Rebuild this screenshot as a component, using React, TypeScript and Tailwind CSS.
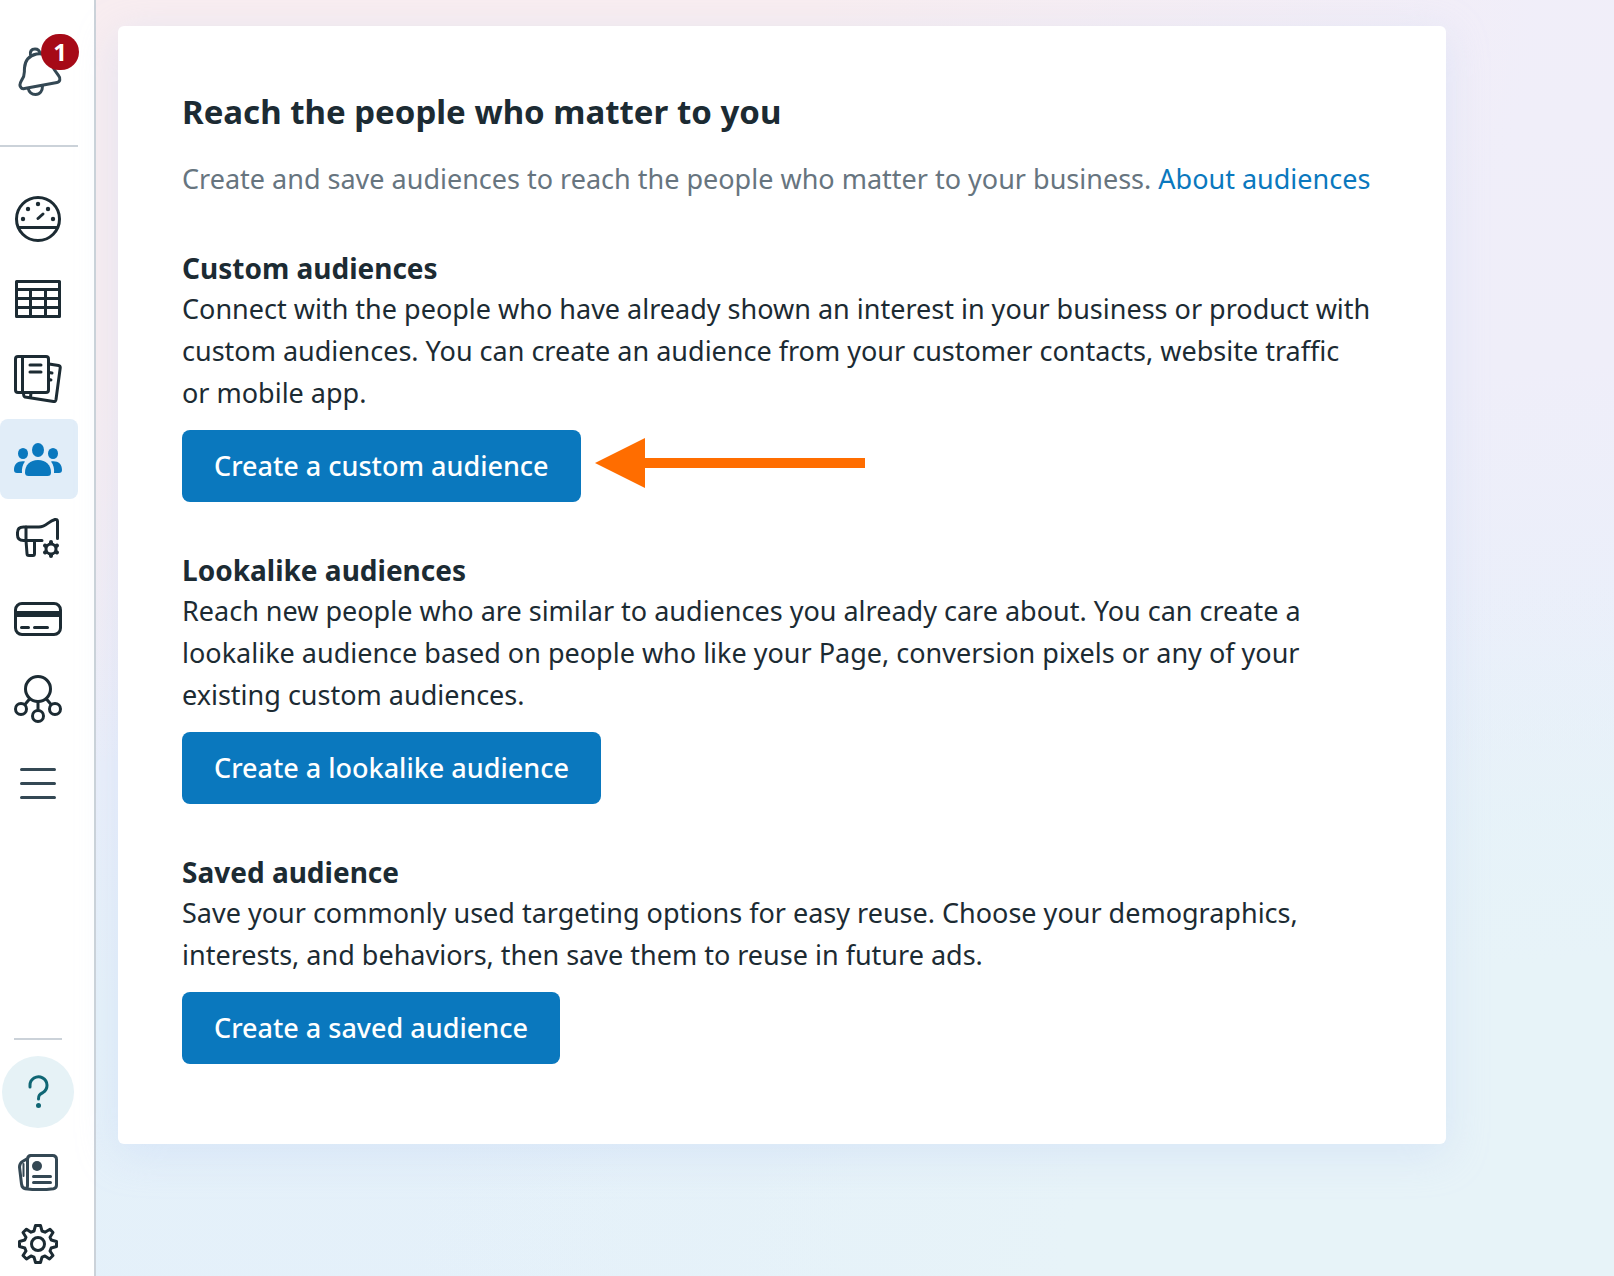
import React from 'react';

interface IconProps {
  className?: string;
}

interface NavItem {
  label: string;
  icon: React.FC<IconProps>;
  active?: boolean;
}

interface AudienceSection {
  title: string;
  body: string;
  action: string;
  highlighted?: boolean;
}

const BellIcon: React.FC<IconProps> = ({ className }) => (
  <svg viewBox="0 0 48 52" className={className} fill="none" stroke="currentColor" strokeWidth="3" strokeLinejoin="round" aria-hidden="true">
    <path d="M6 41.500C4.500 40 5 37 6.500 34.500C10.500 29 9 27.500 9.500 22C10 13.500 15 9.500 21.500 8C29 6.500 34 11 36.500 18C38.500 23.500 41 26.500 43.500 29.500C46 32.500 45 36 42 36.500L9.500 42.500C7.500 43 6.500 42.500 6 41.500Z" />
    <path d="M15.500 9.500C14.500 5.500 16.500 3 20 3C23 3 24.500 4.500 25 7.500" />
    <path d="M13 42C14 46 16.500 48.500 20.500 48.500C25 48.500 27.500 45 27.500 40" />
  </svg>
);

const GaugeIcon: React.FC<IconProps> = ({ className }) => (
  <svg viewBox="0 0 48 48" className={className} fill="none" stroke="currentColor" strokeWidth="3" aria-hidden="true">
    <circle cx="24" cy="24" r="21.500" />
    <path d="M4 32.500H44" />
    <path d="M24 23.500L29 19" strokeLinecap="round" />
    <g fill="currentColor" stroke="none">
      <circle cx="9" cy="24" r="2.200" />
      <circle cx="14" cy="14" r="2.200" />
      <circle cx="24" cy="9" r="2.200" />
      <circle cx="34" cy="14" r="2.200" />
      <circle cx="39" cy="24" r="2.200" />
    </g>
  </svg>
);

const TableIcon: React.FC<IconProps> = ({ className }) => (
  <svg viewBox="0 0 48 48" className={className} fill="none" stroke="currentColor" strokeWidth="3" strokeLinejoin="round" aria-hidden="true">
    <rect x="2.500" y="6.500" width="43" height="35" />
    <path d="M2.500 14.500H45.500M2.500 23.500H45.500M2.500 32.500H45.500M16.500 14.500V41.500M31.500 14.500V41.500" />
  </svg>
);

const ReportsIcon: React.FC<IconProps> = ({ className }) => (
  <svg viewBox="0 0 48 48" className={className} fill="none" stroke="currentColor" strokeWidth="3" strokeLinejoin="round" strokeLinecap="round" aria-hidden="true">
    <rect x="1.500" y="1.500" width="33" height="36" rx="2.500" />
    <path d="M8.500 1.500V37.500" />
    <path d="M16 10H27M16 17H27" />
    <path d="M35 9L44.500 10.500Q46.500 11 46.200 13L42 44.500Q41.500 47 39.500 46.500L11 42Q9.500 41.500 9.500 38" />
    <path d="M35 17.500L38 18M35 24.500L37 25M17 38L16.500 42" />
  </svg>
);

const AudiencesIcon: React.FC<IconProps> = ({ className }) => (
  <svg viewBox="0 0 48 48" className={className} fill="currentColor" aria-hidden="true">
    <ellipse cx="24" cy="15" rx="6" ry="7" />
    <ellipse cx="9" cy="18.500" rx="5" ry="5.500" />
    <ellipse cx="39" cy="18.500" rx="5" ry="5.500" />
    <path d="M24 25C32 25 37 30 37 37.500Q37 41 33.500 41H14.500Q11 41 11 37.500C11 30 16 25 24 25Z" />
    <path d="M11 26.500C8.500 29.500 7.500 34 8 38H3Q0 38 0 35C0 29 4 25.500 11 26.500Z" />
    <path d="M37 26.500C39.500 29.500 40.500 34 40 38H45Q48 38 48 35C48 29 44 25.500 37 26.500Z" />
  </svg>
);

const CampaignIcon: React.FC<IconProps> = ({ className }) => (
  <svg viewBox="0 0 48 48" className={className} fill="none" stroke="currentColor" strokeWidth="3" strokeLinejoin="round" strokeLinecap="round" aria-hidden="true">
    <path d="M28 25.500H9.500Q3.500 25.500 3.500 20V17.500Q3.500 12 9.500 12H25C32 12 34 6.500 41 4.500Q43.500 4 43.500 6.500V23.500" />
    <path d="M12 12V25.500L13 38.500Q13 40.500 15 40.500H19Q20.500 40.500 20.500 38.500V25.500" />
    <circle cx="37" cy="34" r="5" />
    <path d="M37 27V28M37 40V41M31 30.500L31.800 31M42.200 37L43 37.500M31 37.500L31.800 37M42.200 31L43 30.500" strokeWidth="4" />
  </svg>
);

const BillingIcon: React.FC<IconProps> = ({ className }) => (
  <svg viewBox="0 0 48 48" className={className} fill="none" stroke="currentColor" strokeWidth="3" aria-hidden="true">
    <rect x="1.500" y="8.500" width="45" height="31" rx="6.500" />
    <path d="M1.500 19H46.500" strokeWidth="6" />
    <path d="M7.500 32.500H14.500M20.500 32.500H33.500" strokeLinecap="round" />
  </svg>
);

const EventsIcon: React.FC<IconProps> = ({ className }) => (
  <svg viewBox="0 0 48 48" className={className} fill="none" stroke="currentColor" strokeWidth="3" aria-hidden="true">
    <circle cx="24" cy="14" r="12.500" />
    <circle cx="7" cy="34" r="5.500" />
    <circle cx="24" cy="41" r="5.500" />
    <circle cx="41" cy="34" r="5.500" />
    <path d="M16 23.500L10.500 30M24 26.500V35.500M32 23.500L37.500 30" />
  </svg>
);

const MenuIcon: React.FC<IconProps> = ({ className }) => (
  <svg viewBox="0 0 48 48" className={className} fill="none" stroke="#344854" strokeWidth="3" strokeLinecap="round" aria-hidden="true">
    <path d="M7.500 14.500H40.500M7.500 28.500H40.500M7.500 42.500H40.500" />
  </svg>
);

const NewsIcon: React.FC<IconProps> = ({ className }) => (
  <svg viewBox="0 0 40 40" className={className} fill="none" stroke="currentColor" strokeWidth="3" strokeLinejoin="round" strokeLinecap="round" aria-hidden="true">
    <path d="M13 3.500H34.500Q38.500 3.500 38.500 7.500V33Q38.500 36 35.500 36.700Q22 38.500 7 36.700" />
    <path d="M13 3.500Q9.500 3.500 9.500 7.500V33.500Q9.500 36.500 7 36.500Q4 36 3.500 32L1.500 15Q1.500 11.500 4.500 9.500L9.500 6.500" />
    <path d="M5.500 12V24" strokeWidth="2" />
    <circle cx="19" cy="14" r="5" fill="currentColor" stroke="none" />
    <path d="M15.500 24.500H32.500M15.500 30.500H32.500" />
  </svg>
);

const GearIcon: React.FC<IconProps> = ({ className }) => (
  <svg viewBox="0 0 40 40" className={className} fill="none" stroke="currentColor" strokeWidth="3" strokeLinejoin="round" aria-hidden="true">
    <path d="M17.500 1.500H22.500L24 7L27 8.200L32 5.200L35 8.500L32 13.200L33.200 16L38.500 17.500V22.500L33.200 24L32 27L35 31.500L31.500 35L27 32L24 33.200L22.500 38.500H17.500L16 33.200L13 32L8.500 35L5 31.500L8 27L6.800 24L1.500 22.500V17.500L6.800 16L8 13.200L5 8.500L8.500 5.200L13 8.200L16 7Z" />
    <circle cx="20" cy="20" r="6.500" />
  </svg>
);

const HelpIcon: React.FC<IconProps> = ({ className }) => (
  <svg viewBox="0 0 24 36" className={className} fill="none" stroke="currentColor" strokeWidth="3" strokeLinecap="round" aria-hidden="true">
    <path d="M4 13V11.500A8.500 8.500 0 1 1 17 18.500C13.500 20.500 12.500 21 12.500 25" />
    <circle cx="12.500" cy="31.500" r="2.500" fill="currentColor" stroke="none" />
  </svg>
);

const navItems: NavItem[] = [
  { label: 'Account overview', icon: GaugeIcon },
  { label: 'Campaigns', icon: TableIcon },
  { label: 'Ads reporting', icon: ReportsIcon },
  { label: 'Audiences', icon: AudiencesIcon, active: true },
  { label: 'Advertising settings', icon: CampaignIcon },
  { label: 'Billing', icon: BillingIcon },
  { label: 'Events manager', icon: EventsIcon },
  { label: 'All tools', icon: MenuIcon },
];

const sections: AudienceSection[] = [
  {
    title: 'Custom audiences',
    body: 'Connect with the people who have already shown an interest in your business or product with custom audiences. You can create an audience from your customer contacts, website traffic or mobile app.',
    action: 'Create a custom audience',
    highlighted: true,
  },
  {
    title: 'Lookalike audiences',
    body: 'Reach new people who are similar to audiences you already care about. You can create a lookalike audience based on people who like your Page, conversion pixels or any of your existing custom audiences.',
    action: 'Create a lookalike audience',
  },
  {
    title: 'Saved audience',
    body: 'Save your commonly used targeting options for easy reuse. Choose your demographics, interests, and behaviors, then save them to reuse in future ads.',
    action: 'Create a saved audience',
  },
];

const Sidebar: React.FC = () => (
  <aside className="flex w-24 shrink-0 flex-col border-r-2 border-[#cbd2d9] bg-white text-[#1c2b33]">
    <div className="flex h-[147px] w-[78px] items-start justify-center border-b-2 border-[#cbd2d9] pt-[46px]">
      <button type="button" aria-label="Notifications" className="relative text-[#344854]">
        <BellIcon className="h-[52px] w-12" />
        <span className="absolute -top-3 -right-4 flex h-9 w-[38px] items-center justify-center rounded-full bg-[#a60a17] text-2xl font-bold text-white">1</span>
      </button>
    </div>

    <nav className="mt-8 flex w-[78px] flex-col">
      {navItems.map(({ label, icon: Icon, active }) => (
        <a
          key={label}
          href="#"
          aria-label={label}
          className={active ? 'flex h-20 items-center justify-center rounded-lg bg-[#e1edf8] pr-0.5 text-[#0a78be]' : 'flex h-20 items-center justify-center pr-0.5'}
        >
          <Icon className="size-12" />
        </a>
      ))}
    </nav>

    <div className="mt-auto flex w-[76px] flex-col items-center pb-3">
      <hr className="mb-4 w-12 border-t-2 border-[#cbd2d9]" />
      <button type="button" aria-label="Help" className="flex size-[72px] items-center justify-center rounded-full bg-[#e6f2f6] text-[#0f6674]">
        <HelpIcon className="h-9 w-6" />
      </button>
      <button type="button" aria-label="News" className="mt-6 text-[#344854]">
        <NewsIcon className="size-10" />
      </button>
      <button type="button" aria-label="Settings" className="mt-8">
        <GearIcon className="size-10" />
      </button>
    </div>
  </aside>
);

const Arrow: React.FC = () => (
  <svg viewBox="0 0 270 50" className="mt-2 h-[50px] w-[270px]" fill="#ff6d00" aria-hidden="true">
    <path d="M0 25L50 0V20H270V30H50V50Z" />
  </svg>
);

const App: React.FC = () => (
  <div className="flex min-h-screen font-['Noto_Sans',sans-serif] text-[#1c2b33]">
    <Sidebar />

    <main className="flex-1 bg-[radial-gradient(ellipse_80%_55%_at_100%_100%,#e7f3f8_45%,transparent_100%),radial-gradient(ellipse_95%_60%_at_0%_0%,#f8edf0_50%,transparent_100%),linear-gradient(175deg,#f1eef9_0%,#efeef9_35%,#eaeffa_55%,#e5f1f9_72%,#e4f0fa_100%)] pt-[26px] pr-[168px] pl-[22px]">
      <div className="rounded-md bg-white pt-16 pr-[75px] pb-20 pl-16 shadow-[0_10px_40px_rgba(195,212,245,0.4)]">
        <h1 className="text-[33px] leading-[44px] font-bold">Reach the people who matter to you</h1>
        <p className="mt-6 text-[27px] leading-[42px] text-[#67757f]">
          Create and save audiences to reach the people who matter to your business.{' '}
          <a href="#" className="text-[#0a78be]">About audiences</a>
        </p>

        <div className="mt-12 flex flex-col gap-12">
          {sections.map((section) => (
            <section key={section.title}>
              <h2 className="text-[28px] leading-[40px] font-bold">{section.title}</h2>
              <p className="text-[27px] leading-[42px]">{section.body}</p>
              <div className="mt-4 flex items-start gap-3.5">
                <button type="button" className="h-[72px] rounded-lg bg-[#0a78be] px-8 text-[27px] font-medium text-white">
                  {section.action}
                </button>
                {section.highlighted && <Arrow />}
              </div>
            </section>
          ))}
        </div>
      </div>
    </main>
  </div>
);

export default App;
